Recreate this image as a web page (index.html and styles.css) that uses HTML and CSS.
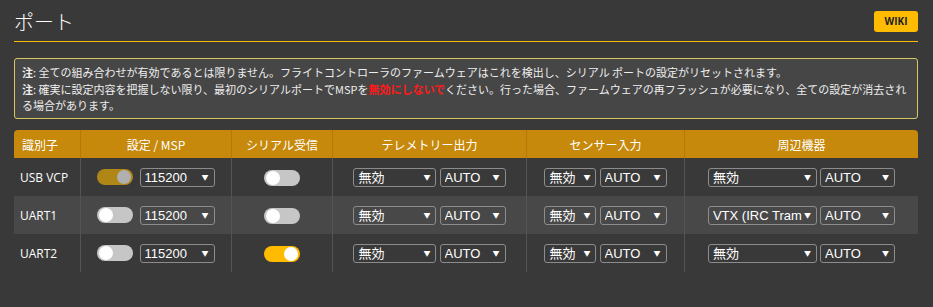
FILE: index.html
```html
<!DOCTYPE html>
<html lang="ja">
<head>
    <meta charset="UTF-8">
    <meta name="viewport" content="width=device-width, initial-scale=1.0">
    <title>ポート</title>
    <link rel="stylesheet" href="styles.css">
</head>
<body>
    <div class="tab-ports">
        <!-- Title bar -->
        <div class="tab-title">
            <h1>ポート</h1>
            <a class="wiki-btn" href="#">WIKI</a>
        </div>

        <!-- Warning note -->
        <div class="note">
            <p><strong>注</strong>: 全ての組み合わせが有効であるとは限りません。フライトコントローラのファームウェアはこれを検出し、シリアル ポートの設定がリセットされます。</p>
            <p><strong>注</strong>: 確実に設定内容を把握しない限り、最初のシリアルポートでMSPを<span class="warn">無効にしないで</span>ください。行った場合、ファームウェアの再フラッシュが必要になり、全ての設定が消去され<br>る場合があります。</p>
        </div>

        <!-- Ports table -->
        <table class="ports">
            <colgroup>
                <col class="c-id">
                <col class="c-msp">
                <col class="c-rx">
                <col class="c-tel">
                <col class="c-sensor">
                <col class="c-periph">
            </colgroup>
            <thead>
                <tr>
                    <th class="id">識別子</th>
                    <th>設定 / MSP</th>
                    <th>シリアル受信</th>
                    <th>テレメトリー出力</th>
                    <th>センサー入力</th>
                    <th>周辺機器</th>
                </tr>
            </thead>
            <tbody>
                <tr>
                    <td class="id">USB VCP</td>
                    <td>
                        <span class="switch on disabled"><span class="knob"></span></span>
                        <span class="sel baud"><select><option>115200</option></select></span>
                    </td>
                    <td><span class="switch"><span class="knob"></span></span></td>
                    <td>
                        <span class="sel tel-func"><select><option>無効</option></select></span>
                        <span class="sel tel-rate"><select><option>AUTO</option></select></span>
                    </td>
                    <td>
                        <span class="sel sen-func"><select><option>無効</option></select></span>
                        <span class="sel sen-rate"><select><option>AUTO</option></select></span>
                    </td>
                    <td>
                        <span class="sel per-func"><select><option>無効</option></select></span>
                        <span class="sel per-rate"><select><option>AUTO</option></select></span>
                    </td>
                </tr>
                <tr class="alt">
                    <td class="id">UART1</td>
                    <td>
                        <span class="switch"><span class="knob"></span></span>
                        <span class="sel baud"><select><option>115200</option></select></span>
                    </td>
                    <td><span class="switch"><span class="knob"></span></span></td>
                    <td>
                        <span class="sel tel-func"><select><option>無効</option></select></span>
                        <span class="sel tel-rate"><select><option>AUTO</option></select></span>
                    </td>
                    <td>
                        <span class="sel sen-func"><select><option>無効</option></select></span>
                        <span class="sel sen-rate"><select><option>AUTO</option></select></span>
                    </td>
                    <td>
                        <span class="sel per-func"><select><option>VTX (IRC Tramp)</option></select></span>
                        <span class="sel per-rate"><select><option>AUTO</option></select></span>
                    </td>
                </tr>
                <tr>
                    <td class="id">UART2</td>
                    <td>
                        <span class="switch"><span class="knob"></span></span>
                        <span class="sel baud"><select><option>115200</option></select></span>
                    </td>
                    <td><span class="switch on"><span class="knob"></span></span></td>
                    <td>
                        <span class="sel tel-func"><select><option>無効</option></select></span>
                        <span class="sel tel-rate"><select><option>AUTO</option></select></span>
                    </td>
                    <td>
                        <span class="sel sen-func"><select><option>無効</option></select></span>
                        <span class="sel sen-rate"><select><option>AUTO</option></select></span>
                    </td>
                    <td>
                        <span class="sel per-func"><select><option>無効</option></select></span>
                        <span class="sel per-rate"><select><option>AUTO</option></select></span>
                    </td>
                </tr>
            </tbody>
        </table>
    </div>
</body>
</html>
```

FILE: styles.css
```css
/* Basic Reset */
* {
    margin: 0;
    padding: 0;
    box-sizing: border-box;
}

body {
    background-color: #393939;
    color: #fff;
    font-family: 'Open Sans', 'Noto Sans CJK JP', sans-serif;
    font-size: 12px;
}

.tab-ports {
    padding: 0 15px 0 14px;
}

/* Title bar */
.tab-title {
    display: flex;
    justify-content: space-between;
    align-items: center;
    height: 42px;
    padding-top: 2px;
    border-bottom: 1px solid #ffbb00;
}

.tab-title h1 {
    font-family: 'Noto Sans CJK JP', sans-serif;
    font-size: 20px;
    font-weight: 300;
    line-height: 24px;
    color: #fff;
}

.wiki-btn {
    display: block;
    width: 44px;
    height: 21px;
    line-height: 21px;
    text-align: center;
    background-color: #ffbb00;
    color: #222;
    font-size: 10px;
    font-weight: bold;
    text-decoration: none;
    border-radius: 3px;
}

/* Note box */
.note {
    margin-top: 16px;
    padding: 5px 7px 5px;
    background-color: #464646;
    border: 1px solid #d9c766;
    border-radius: 3px;
    font-family: 'Noto Sans CJK JP', sans-serif;
    font-size: 11px;
    line-height: 16px;
    color: #eee;
}

.note p:first-child {
    margin-bottom: 1px;
}

.note .warn {
    color: #ff1a1a;
    font-weight: bold;
}

/* Ports table */
.ports {
    width: 904px;
    margin-top: 11px;
    table-layout: fixed;
    border-collapse: separate;
    border-spacing: 0;
}

.c-id { width: 66px; }
.c-msp { width: 151px; }
.c-rx { width: 101px; }
.c-tel { width: 194px; }
.c-sensor { width: 158px; }
.c-periph { width: 234px; }

.ports th {
    height: 28px;
    background-color: #c6890b;
    font-family: 'Noto Sans CJK JP', sans-serif;
    font-size: 12px;
    font-weight: normal;
    text-align: center;
    border-left: 1px solid #b27a08;
}

.ports th:first-child {
    border-left: none;
    border-top-left-radius: 4px;
}

.ports th:last-child {
    border-top-right-radius: 4px;
}

.ports th.id {
    text-align: left;
    padding-left: 8px;
}

.ports td {
    height: 38px;
    text-align: center;
    vertical-align: middle;
    white-space: nowrap;
    border-left: 1px solid #545454;
}

.ports td:first-child {
    border-left: none;
}

.ports td.id {
    text-align: left;
    padding-left: 6px;
    font-size: 12px;
}

.ports tr.alt td {
    background-color: #484848;
}

/* Toggle switch */
.switch {
    display: inline-flex;
    align-items: center;
    width: 36px;
    height: 16px;
    padding: 1px 2px;
    border-radius: 8px;
    background-color: #c6c6c6;
    vertical-align: middle;
    margin-right: 3px;
}

.switch .knob {
    width: 14px;
    height: 14px;
    border-radius: 50%;
    background-color: #fff;
}

.switch.on {
    justify-content: flex-end;
    background-color: #ffbb00;
}

.switch.disabled {
    opacity: 0.6;
}

.ports td:nth-child(3) .switch {
    margin-right: 0;
}

/* Dropdowns */
.sel {
    position: relative;
    display: inline-block;
    vertical-align: middle;
}

.sel select {
    appearance: none;
    -webkit-appearance: none;
    width: 100%;
    height: 19px;
    padding: 0 14px 0 4px;
    background-color: transparent;
    color: #fff;
    border: 1px solid #8c8c8c;
    border-radius: 3px;
    font-family: 'Liberation Sans', 'Noto Sans CJK JP', sans-serif;
    font-size: 13px;
    line-height: 17px;
}

.sel::after {
    content: '▼';
    position: absolute;
    right: 6px;
    top: 4px;
    font-size: 7px;
    color: #fff;
    pointer-events: none;
}

.sel.baud { width: 75px; }
.sel.tel-func { width: 83px; }
.sel.tel-rate { width: 66px; }
.sel.sen-func { width: 52px; }
.sel.sen-rate { width: 67px; }
.sel.per-func { width: 109px; }
.sel.per-rate { width: 75px; }
```
